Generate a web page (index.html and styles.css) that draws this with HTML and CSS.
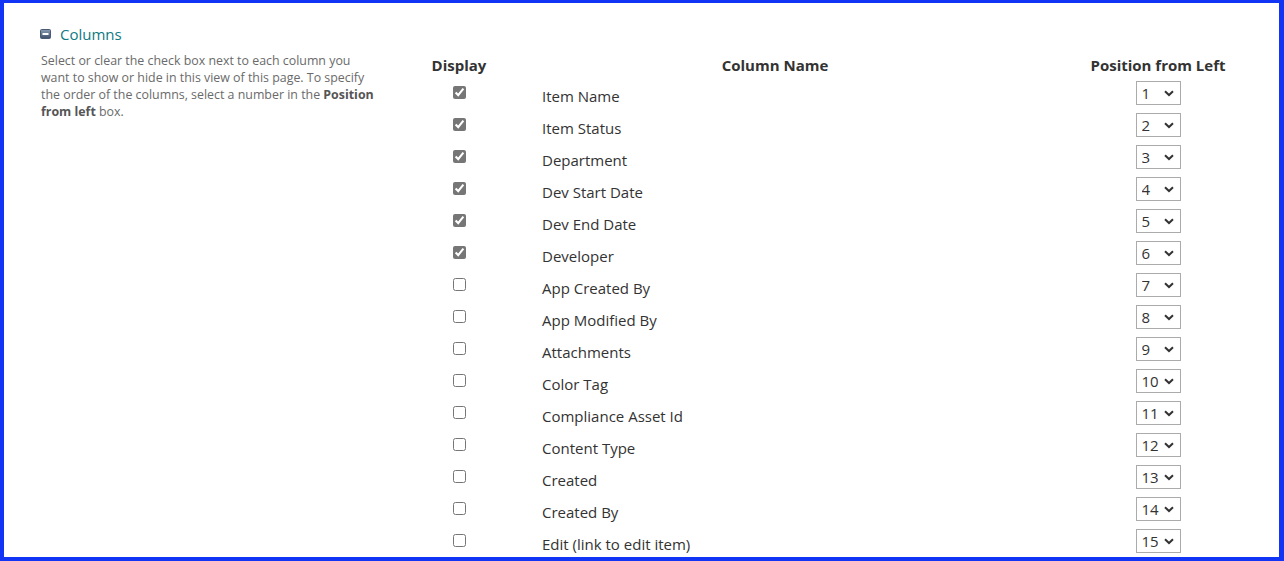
FILE: index.html
```html
<!DOCTYPE html>
<html lang="en">
<head>
  <meta charset="UTF-8">
  <title>Edit View - Columns</title>
  <link rel="stylesheet" href="styles.css">
</head>
<body>

<div class="frame">
  <div class="section">

    <div class="sidebar">
      <h3 class="section-title">
        <svg class="toggle-icon" width="11" height="10" viewBox="0 0 11 10">
          <defs>
            <linearGradient id="tg" x1="0" y1="0" x2="0" y2="1">
              <stop offset="0" stop-color="#8a9bb3"/>
              <stop offset="1" stop-color="#3d4f6b"/>
            </linearGradient>
          </defs>
          <rect x="0.5" y="0.5" width="10" height="9" rx="1" fill="url(#tg)" stroke="#4a5a73"/>
          <rect x="2.5" y="4" width="6" height="2" fill="#fff"/>
        </svg>
        Columns
      </h3>
      <p class="section-desc">Select or clear the check box next to each column you want to show or hide in this view of this page. To specify the order of the columns, select a number in the <b>Position from left</b> box.</p>
    </div>

    <div class="columns-table">
      <div class="th">Display</div>
      <div class="th">Column Name</div>
      <div class="th">Position from Left</div>
    </div>

  </div>
</div>

<script>
  var cols = [
    ["Item Name", true], ["Item Status", true], ["Department", true],
    ["Dev Start Date", true], ["Dev End Date", true], ["Developer", true],
    ["App Created By", false], ["App Modified By", false], ["Attachments", false],
    ["Color Tag", false], ["Compliance Asset Id", false], ["Content Type", false],
    ["Created", false], ["Created By", false], ["Edit (link to edit item)", false]
  ];

  var table = document.querySelector('.columns-table');

  cols.forEach(function (c, i) {
    var cb = document.createElement('div');
    cb.className = 'td td-check';
    cb.innerHTML = '<input type="checkbox"' + (c[1] ? ' checked' : '') + '>';

    var name = document.createElement('div');
    name.className = 'td td-name';
    name.textContent = c[0];

    var pos = document.createElement('div');
    pos.className = 'td td-pos';
    var opts = '';
    for (var n = 1; n <= cols.length; n++) {
      opts += '<option' + (n === i + 1 ? ' selected' : '') + '>' + n + '</option>';
    }
    pos.innerHTML = '<div class="pos-select"><select>' + opts + '</select>' +
      '<svg class="chev" width="10" height="7" viewBox="0 0 10 7"><path d="M1 1.2 L5 5 L9 1.2" fill="none" stroke="#333" stroke-width="2"/></svg></div>';

    table.appendChild(cb);
    table.appendChild(name);
    table.appendChild(pos);
  });
</script>

</body>
</html>
```

FILE: styles.css
```css
html, body {
  margin: 0;
  padding: 0;
  background: #fff;
}

body {
  font-family: "Open Sans", "Noto Sans", sans-serif;
  color: #333;
}

.frame {
  box-sizing: border-box;
  height: 561px;
  border-style: solid;
  border-color: #1234f5;
  border-width: 3px 5px 4px 4px;
  overflow: hidden;
}

.section {
  display: flex;
  padding: 21px 0 0 36px;
}

.sidebar {
  width: 340px;
  flex-shrink: 0;
}

.section-title {
  display: flex;
  align-items: center;
  margin: 0;
  font-size: 15px;
  font-weight: normal;
  line-height: 20px;
  color: #0e7a82;
}

.toggle-icon {
  margin: 0 9px 0 0;
}

.section-desc {
  margin: 8px 0 0 1px;
  max-width: 338px;
  font-size: 12.4px;
  line-height: 17px;
  color: #6a6a6a;
}

.section-desc b {
  color: #555;
}

.columns-table {
  margin: 26px 0 0 40px;
  display: grid;
  grid-template-columns: 78px 554px 212px;
  grid-template-rows: 30px;
  grid-auto-rows: 32px;
}

.th {
  display: flex;
  align-items: center;
  justify-content: center;
  font-size: 15px;
  font-weight: bold;
  color: #333;
}

.td {
  display: flex;
  align-items: center;
  font-size: 15px;
  color: #333;
}

.td-check {
  justify-content: center;
  align-items: flex-start;
}

.td-check input {
  width: 13px;
  height: 13px;
  margin: 6px 0 0 0;
  accent-color: #767676;
}

.td-name {
  padding-left: 44px;
}

.td-pos {
  justify-content: center;
  align-items: flex-start;
}

.pos-select {
  position: relative;
  width: 45px;
  height: 24px;
  margin-top: 1px;
}

.pos-select select {
  appearance: none;
  -webkit-appearance: none;
  box-sizing: border-box;
  width: 45px;
  height: 24px;
  padding: 0 0 0 5px;
  border: 1px solid #ababab;
  border-radius: 0;
  background: #fff;
  font-family: "Open Sans", "Noto Sans", sans-serif;
  font-size: 15px;
  color: #333;
}

.chev {
  position: absolute;
  right: 7px;
  top: 9px;
  pointer-events: none;
}
```
